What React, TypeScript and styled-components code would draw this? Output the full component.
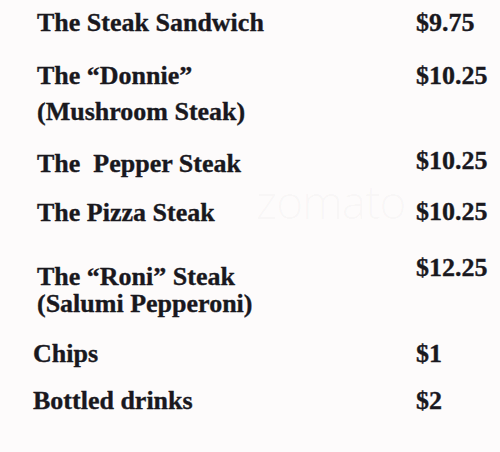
import styled, { createGlobalStyle } from 'styled-components';

interface IMenuItem {
  name: string;
  note?: string;
  price: string;
  gap: number;
  lift?: number;
  outdent?: boolean;
  loose?: boolean;
}

const items: IMenuItem[] = [
  { name: 'The Steak Sandwich', price: '$9.75', gap: 9 },
  { name: 'The \u201CDonnie\u201D', note: '(Mushroom Steak)', price: '$10.25', gap: 26, loose: true },
  { name: 'The  Pepper Steak', price: '$10.25', gap: 25, lift: 3 },
  { name: 'The Pizza Steak', price: '$10.25', gap: 22, lift: 1 },
  { name: 'The \u201CRoni\u201D Steak', note: '(Salumi Pepperoni)', price: '$12.25', gap: 37, lift: 9 },
  { name: 'Chips', price: '$1', gap: 23, outdent: true },
  { name: 'Bottled drinks', price: '$2', gap: 20, outdent: true },
];

function App(): React.ReactElement {
  return (
    <>
      <GlobalStyle />
      <Sheet>
        <Watermark>zomato</Watermark>
        {items.map((item) => (
          <Row key={item.name} $gap={item.gap}>
            <Name $outdent={!!item.outdent}>
              <Line>{item.name}</Line>
              {item.note && <Note $loose={!!item.loose}>{item.note}</Note>}
            </Name>
            <Price $lift={item.lift ?? 0}>{item.price}</Price>
          </Row>
        ))}
      </Sheet>
    </>
  );
}

const ink = '#19181e';
const paper = '#fdfbfb';

const GlobalStyle = createGlobalStyle`
  html, body {
    margin: 0;
    padding: 0;
    background: ${paper};
  }
`;

const Sheet = styled.div`
  position: relative;
  width: 500px;
  height: 452px;
  box-sizing: border-box;
  overflow: hidden;
  background: ${paper};
  color: ${ink};
  font-family: 'Liberation Serif', 'Times New Roman', serif;
  font-weight: 700;
  font-size: 26px;
  line-height: 27px;
  -webkit-text-stroke: 0.35px ${ink};
`;

const Watermark = styled.div`
  position: absolute;
  left: 256px;
  top: 188px;
  font-family: 'Open Sans', sans-serif;
  font-weight: 300;
  font-size: 46px;
  letter-spacing: -1px;
  color: rgba(120, 110, 110, 0.04);
  -webkit-text-stroke: 0;
  pointer-events: none;
`;

const Row = styled.div<{ $gap: number }>`
  display: flex;
  align-items: flex-start;
  padding-top: ${({ $gap }) => $gap}px;
`;

const Name = styled.div<{ $outdent: boolean }>`
  width: ${({ $outdent }) => ($outdent ? 383 : 379)}px;
  padding-left: ${({ $outdent }) => ($outdent ? 33 : 37)}px;
  display: flex;
  flex-direction: column;
  white-space: pre;
`;

const Line = styled.span``;

const Note = styled.span<{ $loose: boolean }>`
  margin-top: ${({ $loose }) => ($loose ? 9 : 0)}px;
`;

const Price = styled.span<{ $lift: number }>`
  margin-top: ${({ $lift }) => -$lift}px;
`;

export default App;
